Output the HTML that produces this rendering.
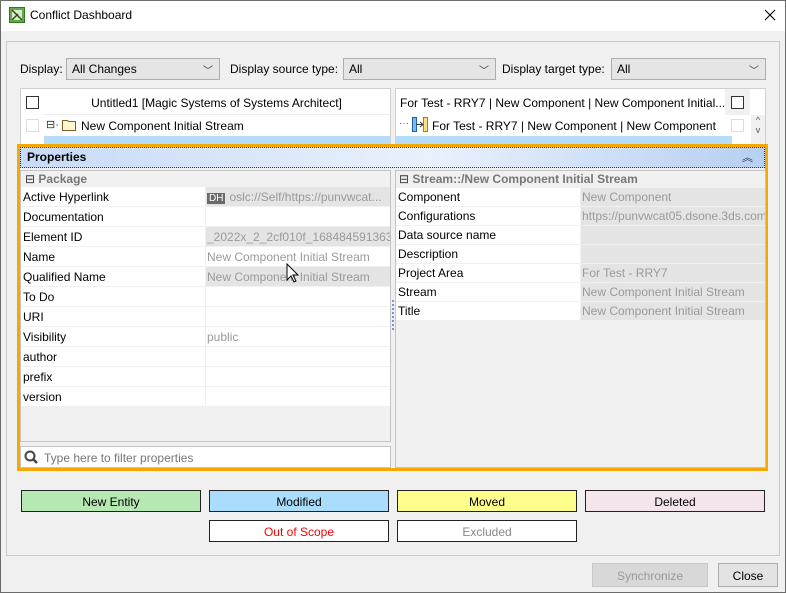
<!DOCTYPE html><html><head><style>
*{box-sizing:border-box;margin:0;padding:0}
body{width:786px;height:593px;background:#f0f0f0;font-family:"Liberation Sans",sans-serif;font-size:12px;color:#000;position:relative;overflow:hidden}
.a{position:absolute}
.t{white-space:nowrap;overflow:hidden}
.combo{background:#e5e5e5;border:1px solid #adadad;height:22px;padding:3px 5px}
.chev{position:absolute;right:6px;top:3px;color:#333;font-size:10px}
.cb{width:13px;height:13px;border:1px solid #333;background:#fff;position:absolute}
.row{position:absolute;height:20px;border-bottom:1px solid #f0f0f0;background:#fff}
.row .k{position:absolute;left:2px;top:3px}
.row .v{position:absolute;top:0;bottom:0;padding:3px 1px;color:#9a9a9a;border-left:1px solid #f0f0f0;white-space:nowrap;overflow:hidden}
.lg{position:absolute;height:22px;border:1px solid #222;text-align:center;padding-top:4px;font-size:12px}
</style></head><body>
<div class="a" style="left:0;top:0;width:786px;height:31px;background:#fff"></div>
<div class="a" style="left:0;top:0;width:786px;height:593px;border:1px solid #6b6b6b;z-index:5;pointer-events:none"></div>
<svg class="a" style="left:9px;top:7px" width="16" height="16"><rect x="0.5" y="0.5" width="15" height="15" fill="#6aa84f" stroke="#38761d"/><rect x="3" y="3" width="10" height="10" fill="#d9ead3"/><path d="M3 3L13 13M3 13L9 7" stroke="#274e13" stroke-width="1.5"/></svg>
<div class="a" style="left:30px;top:8px;font-size:12px">Conflict Dashboard</div>
<svg class="a" style="left:764px;top:9px" width="12" height="12"><path d="M1 1L11 11M11 1L1 11" stroke="#000" stroke-width="1.1"/></svg>
<div class="a" style="left:6px;top:41px;width:774px;height:515px;border:1px solid #c9c9c9"></div>
<div class="a" style="left:20px;top:62px">Display:</div>
<div class="a combo" style="left:66px;top:58px;width:154px">All Changes<span class="chev">﹀</span></div>
<div class="a" style="left:230px;top:62px">Display source type:</div>
<div class="a combo" style="left:343px;top:58px;width:153px">All<span class="chev">﹀</span></div>
<div class="a" style="left:502px;top:62px">Display target type:</div>
<div class="a combo" style="left:611px;top:58px;width:155px">All<span class="chev">﹀</span></div>
<div class="a" style="left:20px;top:88px;width:371px;height:58px;background:#fff;border:1px solid #d0d0d0"></div>
<div class="cb" style="left:26px;top:96px"></div>
<div class="a" style="left:43px;top:88px;width:347px;height:27px;border-bottom:1px solid #eee;text-align:center;padding-top:8px">Untitled1 [Magic Systems of Systems Architect]</div>
<div class="cb" style="left:26px;top:119px;border-color:#ddd"></div>
<div class="a" style="left:46px;top:118px;font-size:11px;color:#333">⊟·</div>
<svg class="a" style="left:62px;top:119px" width="14" height="12"><path d="M0.5 1.5h5l1 1h7v9h-13z" fill="#fff8d0" stroke="#806020"/></svg>
<div class="a" style="left:81px;top:119px">New Component Initial Stream</div>
<div class="a" style="left:44px;top:136px;width:346px;height:9px;background:#b5dcfa"></div>
<div class="a" style="left:395px;top:88px;width:371px;height:58px;background:#fff;border:1px solid #d0d0d0"></div>
<div class="a t" style="left:400px;top:96px;width:325px">For Test - RRY7 | New Component | New Component Initial...</div>
<div class="a" style="left:725px;top:89px;width:25px;height:26px;background:#f0f0f0"></div>
<div class="cb" style="left:731px;top:96px"></div>
<div class="a" style="left:399px;top:118px;font-size:10px;color:#555">···</div>
<svg class="a" style="left:412px;top:117px" width="16" height="15"><rect x="0.5" y="0.5" width="4" height="14" fill="#7ab8f0" stroke="#2060a0"/><rect x="11.5" y="0.5" width="4" height="14" fill="#ffe080" stroke="#a08020"/><path d="M4 7.5h6M8 5l3 2.5-3 2.5" stroke="#333" fill="none"/></svg>
<div class="a" style="left:432px;top:119px">For Test - RRY7 | New Component | New Component</div>
<div class="cb" style="left:731px;top:119px;border-color:#ddd"></div>
<div class="a" style="left:751px;top:115px;width:14px;height:30px;background:#f0f0f0;font-size:9px;text-align:center;color:#555">^<br>v</div>
<div class="a" style="left:396px;top:136px;width:336px;height:9px;background:#b5dcfa"></div>
<div class="a" style="left:17px;top:144px;width:751px;height:327px;border:3px solid #f5a800;background:#f0f0f0"></div>
<div class="a" style="left:20px;top:147px;width:745px;height:21px;background:linear-gradient(90deg,#c7daf6,#e9f1fd 55%,#b7cff1);border:1px dotted #334"></div>
<div class="a" style="left:27px;top:150px;font-weight:bold">Properties</div>
<div class="a" style="left:742px;top:149px;font-size:11px;color:#224">︽</div>
<div class="a" style="left:20px;top:170px;width:371px;height:272px;border:1px solid #c4c4c4;background:#f0f0f0"></div>
<div class="a" style="left:25px;top:172px;font-weight:bold;color:#777"><span style="font-weight:normal;color:#333">⊟</span> Package</div>
<div id="L"></div>
<div class="a" style="left:20px;top:446px;width:371px;height:22px;background:#fff;border:1px solid #c4c4c4"></div>
<svg class="a" style="left:24px;top:450px" width="14" height="14"><circle cx="6" cy="6" r="4.5" stroke="#444" stroke-width="2" fill="none"/><path d="M9 9l4 4" stroke="#444" stroke-width="2.5"/></svg>
<div class="a" style="left:44px;top:451px;color:#777">Type here to filter properties</div>
<div class="a" style="left:395px;top:170px;width:371px;height:298px;border:1px solid #c4c4c4;background:#f0f0f0"></div>
<div class="a" style="left:399px;top:172px;font-weight:bold;color:#777"><span style="font-weight:normal;color:#333">⊟</span> Stream::/New Component Initial Stream</div>
<div class="a" style="left:392px;top:300px;height:30px;border-left:2px dotted #6a9ad8"></div>
<div id="R"></div>
<div class="lg" style="left:21px;top:490px;width:180px;background:#b6e8b4">New Entity</div>
<div class="lg" style="left:209px;top:490px;width:180px;background:#aadcfc">Modified</div>
<div class="lg" style="left:397px;top:490px;width:180px;background:#fdfd8c">Moved</div>
<div class="lg" style="left:585px;top:490px;width:180px;background:#f4e4ec">Deleted</div>
<div class="lg" style="left:209px;top:520px;width:180px;background:#fff;color:#f00">Out of Scope</div>
<div class="lg" style="left:397px;top:520px;width:180px;background:#fff;color:#888">Excluded</div>
<div class="a" style="left:592px;top:563px;width:116px;height:24px;background:#d8d8d8;border:1px solid #c8c8c8;color:#999;text-align:center;padding-top:5px">Synchronize</div>
<div class="a" style="left:718px;top:563px;width:60px;height:24px;background:#e3e3e3;border:1px solid #adadad;text-align:center;padding-top:5px">Close</div>
<svg class="a" style="left:286px;top:263px" width="14" height="22"><path d="M1 1v16l4-4 3 6 2-1-3-6h5z" fill="#fff" stroke="#000"/></svg>
<script>
var L=[["Active Hyperlink","oslc://Self/https://punvwcat...",1,1],["Documentation",""],["Element ID","_2022x_2_2cf010f_1684845913635_6",1],["Name","New Component Initial Stream"],["Qualified Name","New Component Initial Stream",1],["To Do",""],["URI",""],["Visibility","public"],["author",""],["prefix",""],["version",""]];
var h="";L.forEach(function(r,i){h+='<div class="row" style="left:21px;top:'+(187+i*20)+'px;width:369px"><span class="k">'+r[0]+'</span><span class="v" style="left:184px;right:0;'+(r[2]?'background:#e4e4e4':'')+'">'+(r[3]?'<span style="background:#6a6a6a;color:#fff;font-size:10px;padding:0 2px;margin-right:4px">DH</span>':'')+r[1]+'</span></div>'});
document.getElementById("L").innerHTML=h;
var R=[["Component","New Component"],["Configurations","https://punvwcat05.dsone.3ds.com"],["Data source name",""],["Description",""],["Project Area","For Test - RRY7"],["Stream","New Component Initial Stream"],["Title","New Component Initial Stream"]];
h="";R.forEach(function(r,i){h+='<div class="row" style="left:396px;top:'+(188+i*19)+'px;height:19px;width:369px"><span class="k" style="top:2px">'+r[0]+'</span><span class="v" style="left:184px;right:0;padding-top:2px;background:#e4e4e4">'+r[1]+'</span></div>'});
document.getElementById("R").innerHTML=h;
</script>
</body></html>
